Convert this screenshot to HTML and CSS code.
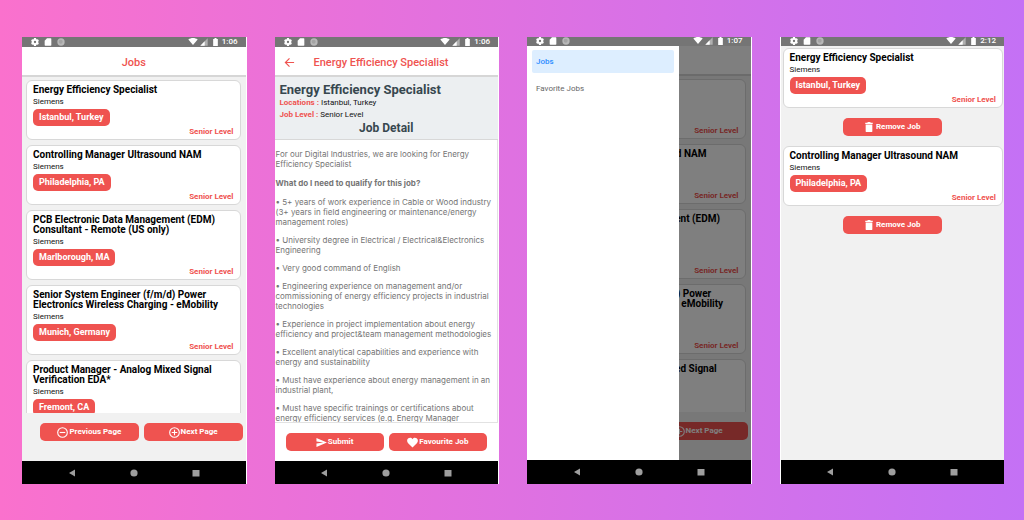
FILE: index.html
```html
<!DOCTYPE html>
<html lang="en">
<head>
<meta charset="utf-8">
<title>Jobs app screens</title>
<link rel="stylesheet" href="styles.css">
</head>
<body>
<svg class="defs" aria-hidden="true">
  <symbol id="gear" viewBox="0 0 24 24"><path fill-rule="evenodd" d="M9 0h6l.6 3.200 2.200 1.300 3.100-1.100 3 5.300-2.500 2.100v2.400l2.500 2.100-3 5.300-3.100-1.100-2.200 1.300L15 24H9l-.6-3.300-2.200-1.300-3.100 1.100-3-5.300 2.500-2.100v-2.400L.1 8.700l3-5.300 3.100 1.100 2.200-1.300zM12 8.500a3.500 3.500 0 1 0 0 7 3.500 3.500 0 0 0 0-7z"/></symbol>
  <symbol id="sd" viewBox="0 0 24 24"><path d="M9 1h11a2 2 0 0 1 2 2v18a2 2 0 0 1-2 2H4a2 2 0 0 1-2-2V8z"/></symbol>
  <symbol id="disc" viewBox="0 0 24 24"><circle cx="12" cy="12" r="11" fill="#b8b8b8"/><circle cx="11" cy="11" r="6" fill="#a4a4a4"/></symbol>
  <symbol id="wifi" viewBox="0 0 24 18"><path d="M0 4C7-1.300 17-1.300 24 4L12 18z"/></symbol>
  <symbol id="signal" viewBox="0 0 24 24"><path d="M23 1v22H1z" fill="#b0b0b0"/><path d="M14 10v13H1z"/></symbol>
  <symbol id="battery" viewBox="0 0 14 24"><path d="M4 0h6v3h4v21H0V3h4z"/></symbol>
  <symbol id="back" viewBox="0 0 24 24"><path d="M22 12H3M12 3l-9 9 9 9" fill="none" stroke="currentColor" stroke-width="2.600"/></symbol>
  <symbol id="minus" viewBox="0 0 24 24"><g fill="none" stroke="currentColor" stroke-width="2.400"><circle cx="12" cy="12" r="10.500"/><path d="M6 12h12"/></g></symbol>
  <symbol id="plus" viewBox="0 0 24 24"><g fill="none" stroke="currentColor" stroke-width="2.400"><circle cx="12" cy="12" r="10.500"/><path d="M6 12h12M12 6v12"/></g></symbol>
  <symbol id="send" viewBox="0 0 24 24"><path d="M1 2l23 10L1 22v-8l15-2L1 10z"/></symbol>
  <symbol id="heart" viewBox="0 0 24 24"><path d="M12 23L2.500 13.500C-1 9.800 0 5 3 2.900 6 .9 10 1.600 12 5c2-3.400 6-4.100 9-2.100 3 2.100 4 6.900.5 10.600z"/></symbol>
  <symbol id="trash" viewBox="0 0 18 24"><path d="M0 2h5l1-2h6l1 2h5v3H0zM1 6h16v16a2 2 0 0 1-2 2H3a2 2 0 0 1-2-2z"/></symbol>
  <symbol id="nav-back" viewBox="0 0 8 8"><path d="M1 4l6-3.500v7z"/></symbol>
  <symbol id="nav-home" viewBox="0 0 8 8"><circle cx="4" cy="4" r="3.600"/></symbol>
  <symbol id="nav-apps" viewBox="0 0 8 8"><path d="M.5 1h7v6.500h-7z"/></symbol>
</svg>
<main class="board">

  <section class="phone">
    <div class="status">
      <svg><use href="#gear"/></svg><svg><use href="#sd"/></svg><svg><use href="#disc"/></svg>
      <span class="status-right"><svg class="wifi"><use href="#wifi"/></svg><svg><use href="#signal"/></svg><svg class="battery"><use href="#battery"/></svg><time>1:06</time></span>
    </div>
    <header class="appbar"><h1>Jobs</h1></header>
    <div class="list">
      <article class="card"><h2>Energy Efficiency Specialist</h2><p class="company">Siemens</p><span class="pill">Istanbul, Turkey</span><p class="level">Senior Level</p></article>
      <article class="card"><h2>Controlling Manager Ultrasound NAM</h2><p class="company">Siemens</p><span class="pill">Philadelphia, PA</span><p class="level">Senior Level</p></article>
      <article class="card"><h2>PCB Electronic Data Management (EDM)<br>Consultant - Remote (US only)</h2><p class="company">Siemens</p><span class="pill">Marlborough, MA</span><p class="level">Senior Level</p></article>
      <article class="card"><h2>Senior System Engineer (f/m/d) Power<br>Electronics Wireless Charging - eMobility</h2><p class="company">Siemens</p><span class="pill">Munich, Germany</span><p class="level">Senior Level</p></article>
      <article class="card"><h2>Product Manager - Analog Mixed Signal<br>Verification EDA*</h2><p class="company">Siemens</p><span class="pill">Fremont, CA</span></article>
    </div>
    <footer class="actions pager">
      <button class="btn" type="button"><svg><use href="#minus"/></svg>Previous Page</button>
      <button class="btn" type="button"><svg><use href="#plus"/></svg>Next Page</button>
    </footer>
    <div class="navbar"><svg><use href="#nav-back"/></svg><svg><use href="#nav-home"/></svg><svg><use href="#nav-apps"/></svg></div>
  </section>

  <section class="phone">
    <div class="status">
      <svg><use href="#gear"/></svg><svg><use href="#sd"/></svg><svg><use href="#disc"/></svg>
      <span class="status-right"><svg class="wifi"><use href="#wifi"/></svg><svg><use href="#signal"/></svg><svg class="battery"><use href="#battery"/></svg><time>1:06</time></span>
    </div>
    <header class="appbar with-back"><button class="back" type="button" aria-label="Back"><svg><use href="#back"/></svg></button><h1>Energy Efficiency Specialist</h1></header>
    <div class="summary">
      <h2>Energy Efficiency Specialist</h2>
      <p><b>Locations :</b> Istanbul, Turkey</p>
      <p><b>Job Level :</b> Senior Level</p>
      <h3>Job Detail</h3>
    </div>
    <div class="detail">
      <p>For our Digital Industries, we are looking for Energy<br>Efficiency Specialist</p>
      <p><strong>What do I need to qualify for this job?</strong></p>
      <ul>
        <li>• 5+ years of work experience in Cable or Wood industry<br>(3+ years in field engineering or maintenance/energy<br>management roles)</li>
        <li>• University degree in Electrical / Electrical&amp;Electronics<br>Engineering</li>
        <li>• Very good command of English</li>
        <li>• Engineering experience on management and/or<br>commissioning of energy efficiency projects in industrial<br>technologies</li>
        <li>• Experience in project implementation about energy<br>efficiency and project&amp;team management methodologies</li>
        <li>• Excellent analytical capabilities and experience with<br>energy and sustainability</li>
        <li>• Must have experience about energy management in an<br>industrial plant,</li>
        <li>• Must have specific trainings or certifications about<br>energy efficiency services (e.g. Energy Manager</li>
      </ul>
    </div>
    <footer class="actions">
      <button class="btn" type="button"><svg><use href="#send"/></svg>Submit</button>
      <button class="btn" type="button"><svg><use href="#heart"/></svg>Favourite Job</button>
    </footer>
    <div class="navbar"><svg><use href="#nav-back"/></svg><svg><use href="#nav-home"/></svg><svg><use href="#nav-apps"/></svg></div>
  </section>

  <section class="phone short-status">
    <div class="status">
      <svg><use href="#gear"/></svg><svg><use href="#sd"/></svg><svg><use href="#disc"/></svg>
      <span class="status-right"><svg class="wifi"><use href="#wifi"/></svg><svg><use href="#signal"/></svg><svg class="battery"><use href="#battery"/></svg><time>1:07</time></span>
    </div>
    <div class="screen">
      <header class="appbar"></header>
      <div class="list">
        <article class="card"><h2 class="covered">Energy Efficiency Specialist</h2><p class="company covered">Siemens</p><span class="pill covered">Istanbul, Turkey</span><p class="level">Senior Level</p></article>
        <article class="card"><h2>Controlling Manager Ultrasound NAM</h2><p class="company covered">Siemens</p><span class="pill covered">Philadelphia, PA</span><p class="level">Senior Level</p></article>
        <article class="card"><h2>PCB Electronic Data Management (EDM)<br>Consultant - Remote (US only)</h2><p class="company covered">Siemens</p><span class="pill covered">Marlborough, MA</span><p class="level">Senior Level</p></article>
        <article class="card"><h2>Senior System Engineer (f/m/d) Power<br>Electronics Wireless Charging - eMobility</h2><p class="company covered">Siemens</p><span class="pill covered">Munich, Germany</span><p class="level">Senior Level</p></article>
        <article class="card"><h2>Product Manager - Analog Mixed Signal<br>Verification EDA*</h2><p class="company covered">Siemens</p><span class="pill covered">Fremont, CA</span></article>
      </div>
      <footer class="actions pager">
        <button class="btn covered" type="button"><svg><use href="#minus"/></svg>Previous Page</button>
        <button class="btn" type="button"><svg><use href="#plus"/></svg>Next Page</button>
      </footer>
      <div class="scrim"></div>
      <nav class="drawer"><a class="active" href="#jobs">Jobs</a><a href="#favorites">Favorite Jobs</a></nav>
    </div>
    <div class="navbar"><svg><use href="#nav-back"/></svg><svg><use href="#nav-home"/></svg><svg><use href="#nav-apps"/></svg></div>
  </section>

  <section class="phone short-status edge-left">
    <div class="status">
      <svg><use href="#gear"/></svg><svg><use href="#sd"/></svg><svg><use href="#disc"/></svg>
      <span class="status-right"><svg class="wifi"><use href="#wifi"/></svg><svg><use href="#signal"/></svg><svg class="battery"><use href="#battery"/></svg><time>2:12</time></span>
    </div>
    <div class="favorites">
      <article class="card"><h2>Energy Efficiency Specialist</h2><p class="company">Siemens</p><span class="pill">Istanbul, Turkey</span><p class="level">Senior Level</p></article>
      <button class="btn" type="button"><svg class="trash"><use href="#trash"/></svg>Remove Job</button>
      <article class="card"><h2>Controlling Manager Ultrasound NAM</h2><p class="company">Siemens</p><span class="pill">Philadelphia, PA</span><p class="level">Senior Level</p></article>
      <button class="btn" type="button"><svg class="trash"><use href="#trash"/></svg>Remove Job</button>
    </div>
    <div class="navbar"><svg><use href="#nav-back"/></svg><svg><use href="#nav-home"/></svg><svg><use href="#nav-apps"/></svg></div>
  </section>

</main>
</body>
</html>
```
FILE: styles.css
```css
* { box-sizing: border-box; }
body, h1, h2, h3, p, ul { margin: 0; padding: 0; }
body {
  font-family: Roboto, "Liberation Sans", sans-serif;
  background: linear-gradient(to right, #fa71cd, #c471f5);
}
svg { display: block; flex: none; width: 8px; height: 8px; fill: currentColor; }
.defs { position: absolute; width: 0; height: 0; }
.board {
  display: grid;
  grid-template-columns: repeat(4, minmax(0, 1fr));
  gap: 28px;
  height: 100vh;
  padding: 37px 20px 36px 22px;
}
.phone {
  display: flex;
  flex-direction: column;
  min-height: 0;
  overflow: hidden;
  background: #f1f1f1;
  border-right: 1px solid #fff;
}
.edge-left { border-right: 0; border-left: 1px solid #fff; }

/* Status bar */
.status {
  display: flex;
  align-items: center;
  flex: none;
  gap: 5px;
  height: 10px;
  padding: 0 8px 1px 9px;
  overflow: hidden;
  background: #757575;
  color: #fff;
}
.short-status .status { height: 9px; padding-bottom: 2px; }
.status-right { display: flex; align-items: center; gap: 2px; margin-left: auto; }
.status .wifi { width: 10px; height: 7px; }
.status .battery { width: 5px; margin-left: 3px; }
.status time { font-size: 8px; line-height: 8px; font-weight: 500; margin-left: 2px; }

/* App bar */
.appbar {
  display: flex;
  align-items: center;
  justify-content: center;
  flex: none;
  height: 30px;
  padding-top: 3px;
  background: #fff;
  border-bottom: 2px solid #d6d6d6;
  color: #ef5350;
}
.appbar h1 { font-size: 11px; line-height: 14px; font-weight: 500; }
.with-back { justify-content: flex-start; gap: 19px; padding-left: 9px; }
.back { padding: 0; border: 0; background: none; color: inherit; }
.back svg { width: 11px; height: 11px; }

/* Job cards */
.list {
  display: flex;
  flex-direction: column;
  flex: 1 1 0;
  min-height: 0;
  gap: 5px;
  padding: 3px 5px 0 4px;
  overflow: hidden;
}
.card {
  flex: none;
  padding: 4px 6px 2px 6px;
  background: #fff;
  border: 1px solid #d8d8d8;
  border-radius: 6px;
  white-space: nowrap;
}
.card h2 { font-size: 10px; line-height: 10px; font-weight: 700; color: #000; }
.company { margin: 2px 0; font-size: 8px; line-height: 10px; color: #111; }
.pill {
  display: block;
  width: fit-content;
  padding: 0 6px;
  background: #ef5350;
  border-radius: 5px;
  color: #fff;
  font-size: 9px;
  line-height: 17px;
  font-weight: 700;
}
.level { margin-top: 1px; font-size: 8px; line-height: 10px; font-weight: 700; text-align: right; color: #ef5350; }

/* Buttons */
.actions { display: flex; justify-content: center; flex: none; gap: 5px; padding: 10px 11px; background: #fff; }
.pager { padding: 10px 3px 20px 18px; background: none; }
.btn {
  display: flex;
  align-items: center;
  justify-content: center;
  flex: 1 1 0;
  height: 18px;
  padding: 0;
  border: 0;
  border-radius: 5px;
  background: #ef5350;
  color: #fff;
  font: 700 8px/10px Roboto, "Liberation Sans", sans-serif;
  white-space: nowrap;
}
.btn svg { width: 11px; height: 11px; margin-right: 1px; }
.btn .trash { width: 8px; height: 10px; margin-right: 3px; }

/* System navigation */
.navbar {
  display: flex;
  align-items: center;
  justify-content: center;
  flex: none;
  gap: 54px;
  height: 23px;
  background: #000;
  color: #9e9e9e;
}
.short-status .navbar { height: 24px; }

/* Job detail */
.summary { flex: none; padding: 5px 5px 4px; background: #eceff1; border-bottom: 1px solid #d8d8d8; }
.summary h2, .summary h3 { color: #37474f; font-weight: 700; }
.summary h2 { font-size: 13px; line-height: 15px; }
.summary h3 { font-size: 12px; line-height: 14px; text-align: center; }
.summary p { font-size: 8px; line-height: 12px; color: #111; }
.summary b { color: #ef5350; }
.detail {
  flex: 1 1 0;
  min-height: 0;
  padding: 9px 0 0 1px;
  overflow: hidden;
  background: #fff;
  border: 1px solid #e2e2e2;
  border-width: 0 1px 1px 0;
  color: #757575;
  font-family: Inter, Roboto, sans-serif;
  font-size: 8px;
  line-height: 10px;
  white-space: nowrap;
}
.detail p { margin-bottom: 9px; }
.detail ul { list-style: none; }
.detail li { margin-bottom: 8px; }

/* Drawer */
.screen { position: relative; display: flex; flex-direction: column; flex: 1 1 0; min-height: 0; }
.covered { visibility: hidden; }
.scrim { position: absolute; inset: 0; background: rgba(0, 0, 0, 0.5); }
.drawer {
  position: absolute;
  inset: 0 auto 0 0;
  display: flex;
  flex-direction: column;
  gap: 4px;
  width: 68%;
  padding: 4px 5px;
  background: #fff;
}
.drawer a { padding: 0 4px; border-radius: 2px; color: #666; font-size: 8px; line-height: 23px; text-decoration: none; }
.drawer .active { background: #ddeeff; color: #2a8cff; font-weight: 500; }

/* Favorites */
.favorites { display: flex; flex-direction: column; flex: 1 1 0; min-height: 0; gap: 10px; padding: 2px 1px 0 2px; overflow: hidden; }
.favorites .btn { flex: none; align-self: center; width: 99px; }
```
